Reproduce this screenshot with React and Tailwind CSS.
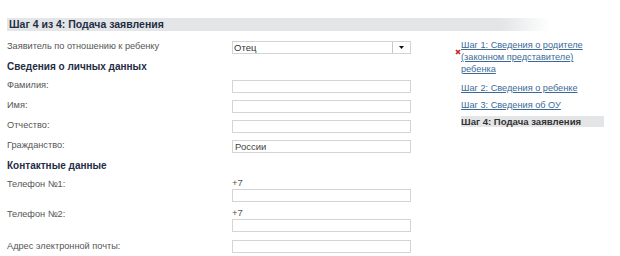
import React from 'react';

const font = { fontFamily: '"Liberation Sans", Arial, sans-serif' };

function TextInput({ value }) {
  return (
    <div className="w-[179px] h-[13px] border border-[#d4d4d4] bg-white text-[9.5px] leading-[11px] text-[#444] pl-[2px] overflow-hidden">
      {value}
    </div>
  );
}

function Row({ label, children }) {
  return (
    <div className="flex items-center h-[20px]">
      <div className="w-[225px] text-[9.2px] text-[#555]">{label}</div>
      {children}
    </div>
  );
}

function PhoneRow({ label }) {
  return (
    <div className="flex h-[30px]">
      <div className="w-[225px] text-[9.2px] text-[#555] leading-[13px] pt-[3px]">{label}</div>
      <div className="flex flex-col">
        <div className="text-[9.5px] leading-[13px] text-[#555] pt-[1px]">+7</div>
        <TextInput />
      </div>
    </div>
  );
}

function RedCross() {
  return (
    <svg width="6" height="6" viewBox="0 0 6 6">
      <path d="M1 1L5 5M5 1L1 5" stroke="#c0282a" strokeWidth="1.7" />
    </svg>
  );
}

export default function App() {
  return (
    <div className="w-[620px] h-[256px] bg-white overflow-hidden" style={font}>
      <div className="pt-[18px] pl-[7px]">
        <div className="w-[543px] h-[13px] bg-[linear-gradient(to_right,#e3e5e6_0%,#e3e5e6_91%,#ffffff_100%)] pl-[2px] text-[10.5px] leading-[13px] font-bold text-[#1f2d45]">
          Шаг 4 из 4: Подача заявления
        </div>
      </div>
      <div className="flex pl-[7px] pt-[7px]">
        <div className="w-[448px]">
          <div className="flex items-center h-[18px]">
            <div className="w-[225px] text-[9.2px] text-[#555]">Заявитель по отношению к ребенку</div>
            <div className="w-[179px] h-[13px] border border-[#d4d4d4] bg-white flex">
              <div className="flex-1 text-[9.5px] leading-[11px] text-[#333] pl-[1px]">Отец</div>
              <div className="w-[18px] border-l border-[#c8c8c8] flex items-center justify-center">
                <svg width="5" height="3" viewBox="0 0 5 3"><path d="M0 0H5L2.5 3Z" fill="#111" /></svg>
              </div>
            </div>
          </div>
          <div className="h-[20px] flex items-center text-[10px] font-bold text-[#1f2d45]">Сведения о личных данных</div>
          <Row label="Фамилия:"><TextInput /></Row>
          <Row label="Имя:"><TextInput /></Row>
          <Row label="Отчество:"><TextInput /></Row>
          <Row label="Гражданство:"><TextInput value="России" /></Row>
          <div className="h-[19px] flex items-center text-[10px] font-bold text-[#1f2d45]">Контактные данные</div>
          <PhoneRow label="Телефон №1:" />
          <PhoneRow label="Телефон №2:" />
          <div className="flex items-center h-[13px] mt-[5px]">
            <div className="w-[225px] text-[9.2px] text-[#555]">Адрес электронной почты:</div>
            <TextInput />
          </div>
        </div>
        <div className="flex flex-col text-[9.2px] leading-[12px] pt-[1px]">
          <div className="flex">
            <div className="w-[6px] pt-[10px]"><RedCross /></div>
            <a className="underline text-[#3c6a98]">
              Шаг 1: Сведения о родителе<br />(законном представителе)<br />ребенка
            </a>
          </div>
          <a className="underline text-[#3c6a98] ml-[6px] mt-[7px]">Шаг 2: Сведения о ребенке</a>
          <a className="underline text-[#3c6a98] ml-[6px] mt-[5px]">Шаг 3: Сведения об ОУ</a>
          <div className="ml-[6px] mt-[5px] w-[143px] h-[11px] bg-[#e3e5e6] font-bold text-[9.6px] text-[#333] leading-[11px]">Шаг 4: Подача заявления</div>
        </div>
      </div>
    </div>
  );
}
